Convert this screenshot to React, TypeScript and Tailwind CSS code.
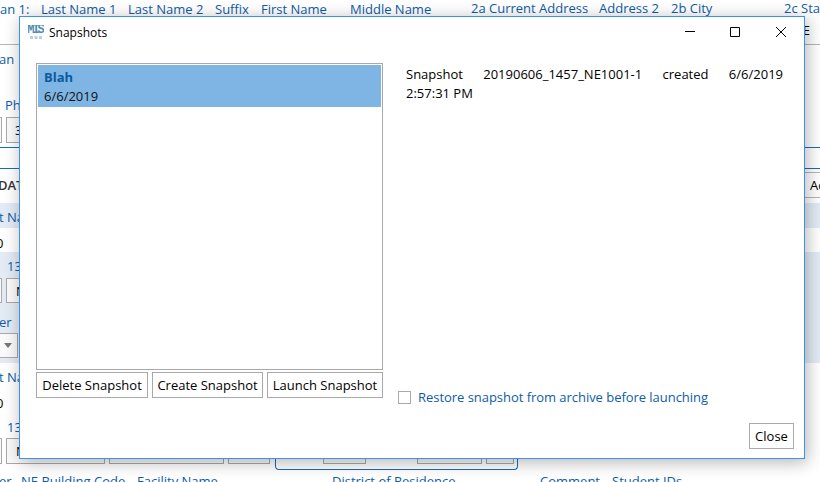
const font = "font-['Open_Sans',sans-serif]";

function BgBox({ className, children }: { className: string; children?: React.ReactNode }) {
  return <div className={`border border-[#a9a9a9] bg-[#fafafa] text-black flex items-center overflow-hidden shrink-0 ${className}`}>{children}</div>;
}

function Background() {
  return (
    <div className="flex flex-col h-full text-[13px] leading-[18px] text-[#0f5ca8]">
      <div className="h-[16px] flex whitespace-nowrap overflow-hidden shrink-0 [&>span]:shrink-0">
        <span className="w-[41px]">an 1:</span>
        <span className="w-[87px]">Last Name 1</span>
        <span className="w-[87px]">Last Name 2</span>
        <span className="w-[46px]">Suffix</span>
        <span className="w-[89px]">First Name</span>
        <span className="w-[121px]">Middle Name</span>
        <span className="w-[128px] -mt-[1px]">2a Current Address</span>
        <span className="w-[72px] -mt-[1px]">Address 2</span>
        <span className="w-[113px] -mt-[1px]">2b City</span>
        <span className="-mt-[1px]">2c State</span>
      </div>
      <div className="h-[29px] shrink-0 border-b border-[#b5b5b5] flex justify-end items-center pr-[10px] text-black">E</div>
      <div className="h-[51px] shrink-0 pt-[5px]"><span className="block -ml-[1px]">an</span></div>
      <div className="h-[21px] shrink-0 pl-[5px]">Ph</div>
      <div className="h-[26px] shrink-0 flex gap-[4px]">
        <BgBox className="w-[2px] border-l-0" />
        <BgBox className="w-[60px] pl-[8px]">3</BgBox>
      </div>
      <div className="h-[5px] shrink-0 border-b border-[#1a6cb5]" />
      <div className="h-[21px] shrink-0 border-b border-[#1a6cb5]" />
      <div className="h-[3px] shrink-0" />
      <div className="h-[26px] shrink-0 flex justify-between items-center text-black">
        <span className="-ml-[2px] text-[#333] font-semibold">DATA</span>
        <div className="w-[15px] h-full border-y border-[#b5b5b5] pl-[5px] flex items-center">Ac</div>
      </div>
      <div className="h-[5px] shrink-0" />
      <div className="h-[160px] shrink-0 bg-[#e3ebf5] flex flex-col">
        <span className="pt-[5px] h-[25px] -ml-[1px]">t Name</span>
        <div className="h-[24px] bg-white text-black pt-[6px]"><span className="block -ml-[4px]">0</span></div>
        <span className="pl-[7px] pt-[5px] h-[26px]">13</span>
        <div className="flex gap-[4px] h-[25px]">
          <BgBox className="w-[2px] border-l-0" />
          <BgBox className="w-[60px] pl-[9px]">N</BgBox>
        </div>
        <span className="pt-[10px] h-[30px] -ml-[1px]">er</span>
        <BgBox className="w-[18px] h-[25px] border-l-0 justify-end pr-[5px]">
          <span className="w-0 h-0 border-x-[4px] border-x-transparent border-t-[5px] border-t-[#777]" />
        </BgBox>
      </div>
      <div className="h-[106px] shrink-0 flex flex-col">
        <span className="pt-[5px] h-[29px] -ml-[1px]">t Name</span>
        <div className="h-[24px] text-black pt-[2px]"><span className="block -ml-[4px]">0</span></div>
        <span className="pl-[7px] pt-[2px] h-[22px]">13</span>
        <div className="flex h-[26px]">
          <BgBox className="w-[2px] border-l-0 mr-[4px]" />
          <BgBox className="w-[99px] pl-[9px] mr-[4px]">N</BgBox>
          <BgBox className="w-[115px] mr-[4px]" />
          <BgBox className="w-[42px] mr-[5px]" />
          <div className="flex w-[243px] h-[32px] border border-t-0 border-[#1a6cb5] rounded-b-[4px] pl-[47px] shrink-0">
            <BgBox className="w-[43px] h-[26px] border-t-0" />
            <BgBox className="w-[65px] h-[26px] border-t-0 ml-[51px]" />
            <BgBox className="w-[28px] h-[26px] border-t-0 ml-[4px]" />
          </div>
        </div>
      </div>
      <div className="flex whitespace-nowrap pt-[3px] [&>span]:shrink-0">
        <span className="w-[22px] -ml-[1px]">er</span>
        <span className="w-[116px]">NE Building Code</span>
        <span className="w-[195px]">Facility Name</span>
        <span className="w-[208px]">District of Residence</span>
        <span className="w-[72px]">Comment</span>
        <span>Student IDs</span>
      </div>
    </div>
  );
}

function Logo() {
  return (
    <div className="w-[16px] h-[15px] flex flex-col items-center overflow-hidden">
      <span className="text-[12px] leading-[10px] font-bold text-[#4f8db0] font-['Liberation_Mono',monospace] tracking-[-2px] pr-[2px]">MIS</span>
      <svg width="15" height="3" viewBox="0 0 15 3" className="mt-[1px]">
        <path d="M1 0h3v3H1zM5.500 0h3v3h-3zM10 0h3v3h-3z" fill="#b9d0dd" />
      </svg>
    </div>
  );
}

function WindowControls() {
  return (
    <div className="flex items-center text-black">
      <svg width="12" height="12" viewBox="0 0 12 12" className="mr-[33px]"><path d="M1 5.500h10" stroke="currentColor" /></svg>
      <svg width="12" height="12" viewBox="0 0 12 12" className="mr-[34px]"><path d="M1.500 1.500h9v9h-9z" fill="none" stroke="currentColor" /></svg>
      <svg width="12" height="12" viewBox="0 0 12 12"><path d="M1 1l10 10M11 1L1 11" stroke="currentColor" fill="none" /></svg>
    </div>
  );
}

function DialogButton({ className, children }: { className: string; children: React.ReactNode }) {
  return (
    <button className={`h-[26px] border border-[#a9a9a9] bg-white text-black flex items-center justify-center whitespace-nowrap ${className}`}>
      {children}
    </button>
  );
}

export default function App() {
  return (
    <div className={`relative w-[820px] h-[482px] overflow-hidden bg-white ${font}`}>
      <Background />
      <div className="absolute left-[19px] top-[16px] w-[786px] h-[443px] bg-white border border-[#3d92e6] shadow-[2px_3px_16px_rgba(0,0,0,0.3)] flex flex-col text-[13px] leading-[19px]">
        <div className="h-[30px] shrink-0 flex items-center justify-between pl-[8px] pr-[17px]">
          <div className="flex items-center gap-[5px]">
            <Logo />
            <span className="text-[12px] text-black">Snapshots</span>
          </div>
          <WindowControls />
        </div>
        <div className="flex pl-[16px] pt-[16px]">
          <div className="w-[347px] shrink-0">
            <div className="h-[307px] border border-[#a9a9a9] p-[1px]">
              <div className="h-[42px] bg-[#7fb5e4] pl-[6px] pt-[3px]">
                <div className="font-bold text-[#0b5a9e]">Blah</div>
                <div className="text-[#111]">6/6/2019</div>
              </div>
            </div>
            <div className="flex justify-between mt-[2px]">
              <DialogButton className="w-[112px]">Delete Snapshot</DialogButton>
              <DialogButton className="w-[111px]">Create Snapshot</DialogButton>
              <DialogButton className="w-[116px]">Launch Snapshot</DialogButton>
            </div>
          </div>
          <div className="w-[400px] ml-[15px] flex flex-col">
            <div className="ml-[8px] w-[377px] mt-[2px] text-black">
              <p className="[text-align-last:justify]">Snapshot 20190606_1457_NE1001-1 created 6/6/2019</p>
              <p>2:57:31 PM</p>
            </div>
            <div className="mt-[285px] flex items-center gap-[7px]">
              <span className="w-[13px] h-[13px] border border-[#a9a9a9] bg-white" />
              <span className="text-[#0f5ca8] tracking-[-0.04px]">Restore snapshot from archive before launching</span>
            </div>
          </div>
        </div>
        <div className="flex justify-end pr-[10px] mt-[16px]">
          <DialogButton className="w-[45px]">Close</DialogButton>
        </div>
      </div>
    </div>
  );
}
